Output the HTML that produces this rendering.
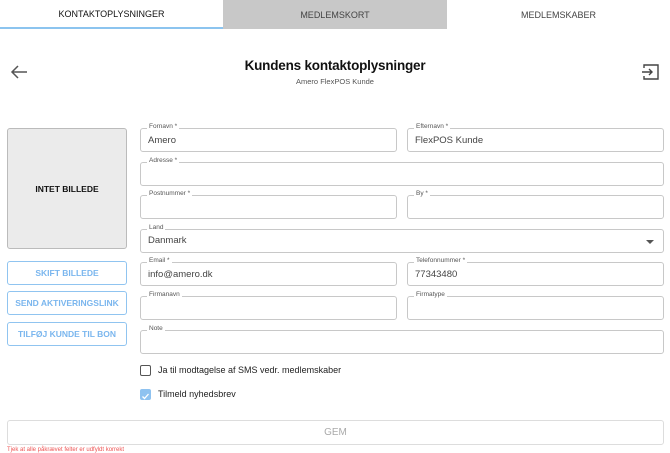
<!DOCTYPE html>
<html><head><meta charset="utf-8"><style>
*{box-sizing:border-box;margin:0;padding:0}
body{width:670px;height:450px;overflow:hidden;background:#fff;font-family:"Liberation Sans",sans-serif;color:#333;position:relative}
.a{position:absolute}
.tab{top:0;height:29px;font-size:9px;display:flex;align-items:center;justify-content:center;color:#444}
.f{position:absolute;border:1px solid #c8c8c8;border-radius:3px;height:24px;font-size:9.5px;color:#444;padding:6px 7px 0}
.f span{position:absolute;top:-6px;left:6px;background:#fff;padding:0 2px;font-size:6.5px;color:#555}
.btn{position:absolute;left:7px;width:120px;height:24px;border:1.5px solid #90c4f0;border-radius:3px;color:#7ab6ee;font-size:8.5px;font-weight:bold;display:flex;align-items:center;justify-content:center}
</style></head><body>
<div class="a tab" style="left:0;width:223px;border-bottom:2px solid #8cc4ef;color:#111">KONTAKTOPLYSNINGER</div>
<div class="a tab" style="left:223px;width:224px;background:#c8c8c8">MEDLEMSKORT</div>
<div class="a tab" style="left:447px;width:223px">MEDLEMSKABER</div>
<svg class="a" style="left:10px;top:64px" width="18" height="16" viewBox="0 0 18 16"><path d="M17 8H2M8 2L2 8l6 6" fill="none" stroke="#555" stroke-width="1.5"/></svg>
<div class="a" style="left:0;width:670px;top:58px;text-align:center;font-size:13.5px;color:#111;font-weight:bold;letter-spacing:-0.2px">Kundens kontaktoplysninger</div>
<div class="a" style="left:0;width:670px;top:77px;text-align:center;font-size:7.5px;color:#555">Amero FlexPOS Kunde</div>
<svg class="a" style="left:641px;top:63px" width="19" height="18" viewBox="0 0 19 18"><path d="M3 5V2h14v14H3v-3M1 9h10M8 6l3 3-3 3" fill="none" stroke="#444" stroke-width="1.4"/></svg>
<div class="a" style="left:7px;top:128px;width:120px;height:121px;background:#ebebeb;border:1px solid #bbb;border-radius:3px;display:flex;align-items:center;justify-content:center;font-size:8.5px;font-weight:bold;color:#111">INTET BILLEDE</div>
<div class="btn" style="top:261px">SKIFT BILLEDE</div>
<div class="btn" style="top:291px">SEND AKTIVERINGSLINK</div>
<div class="btn" style="top:322px">TILFØJ KUNDE TIL BON</div>
<div class="f" style="left:140px;top:128px;width:257px"><span>Fornavn *</span>Amero</div>
<div class="f" style="left:407px;top:128px;width:257px"><span>Efternavn *</span>FlexPOS Kunde</div>
<div class="f" style="left:140px;top:162px;width:524px"><span>Adresse *</span></div>
<div class="f" style="left:140px;top:195px;width:257px"><span>Postnummer *</span></div>
<div class="f" style="left:407px;top:195px;width:257px"><span>By *</span></div>
<div class="f" style="left:140px;top:229px;width:524px;padding-left:7px;padding-top:5px"><span>Land</span>Danmark<div style="position:absolute;right:9px;top:10px;border:4px solid transparent;border-top:4px solid #555"></div></div>
<div class="f" style="left:140px;top:262px;width:257px"><span>Email *</span>info@amero.dk</div>
<div class="f" style="left:407px;top:262px;width:257px"><span>Telefonnummer *</span>77343480</div>
<div class="f" style="left:140px;top:296px;width:257px"><span>Firmanavn</span></div>
<div class="f" style="left:407px;top:296px;width:257px"><span>Firmatype</span></div>
<div class="f" style="left:140px;top:330px;width:524px"><span>Note</span></div>
<div class="a" style="left:140px;top:365px;width:11px;height:11px;border:1.5px solid #555;border-radius:2px"></div>
<div class="a" style="left:158px;top:365px;font-size:9px;color:#222">Ja til modtagelse af SMS vedr. medlemskaber</div>
<div class="a" style="left:140px;top:389px;width:11px;height:11px;background:#8ec2f0;border-radius:2px"><svg width="11" height="11"><path d="M2.5 5.5l2 2 4-4.5" fill="none" stroke="#fff" stroke-width="1.3"/></svg></div>
<div class="a" style="left:158px;top:389px;font-size:9px;color:#222">Tilmeld nyhedsbrev</div>
<div class="a" style="left:7px;top:420px;width:657px;height:25px;border:1px solid #ddd;border-radius:3px;display:flex;align-items:center;justify-content:center;font-size:10px;color:#aaa">GEM</div>
<div class="a" style="left:7px;top:447px;font-size:6px;color:#e55">Tjek at alle påkrævet felter er udfyldt korrekt</div>
</body></html>
